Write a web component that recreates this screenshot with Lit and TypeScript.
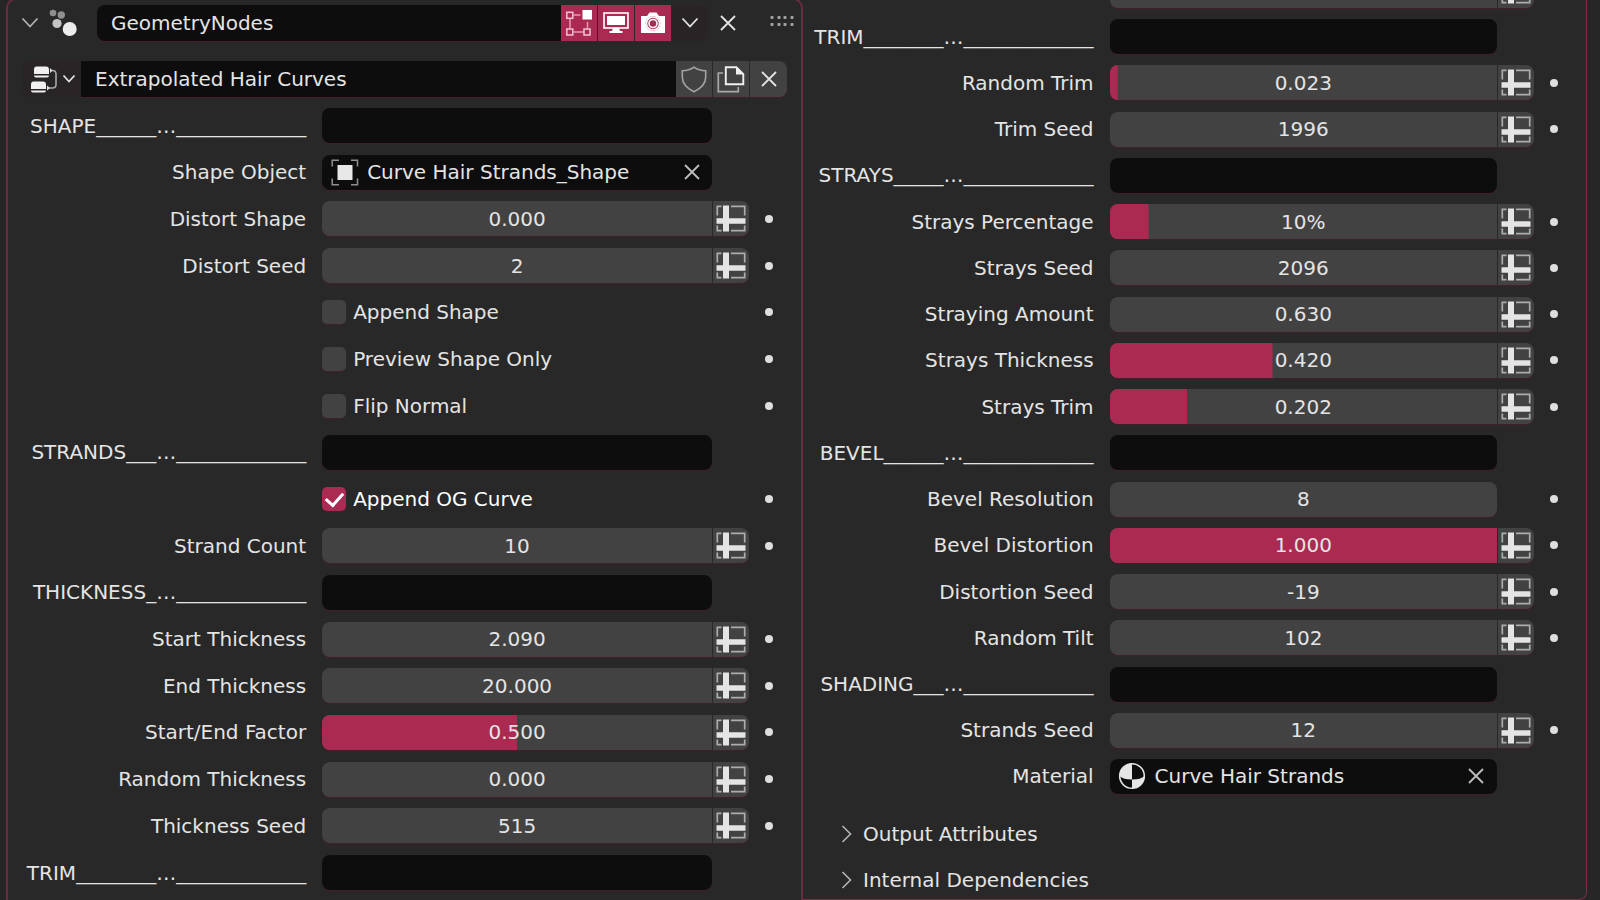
import { LitElement, html, css, svg, nothing } from "lit";
import { customElement, property } from "lit/decorators.js";
import { classMap } from "lit/directives/class-map.js";

type Row =
  | { kind: "section"; label: string }
  | { kind: "number"; label: string; value: string; fill?: number; attribute?: boolean }
  | { kind: "check"; label: string; checked?: boolean }
  | { kind: "picker"; label: string; value: string; icon: "object" | "material" };

const leftRows: Row[] = [
  { kind: "section", label: "SHAPE______…_____________" },
  { kind: "picker", label: "Shape Object", value: "Curve Hair Strands_Shape", icon: "object" },
  { kind: "number", label: "Distort Shape", value: "0.000" },
  { kind: "number", label: "Distort Seed", value: "2" },
  { kind: "check", label: "Append Shape" },
  { kind: "check", label: "Preview Shape Only" },
  { kind: "check", label: "Flip Normal" },
  { kind: "section", label: "STRANDS___…_____________" },
  { kind: "check", label: "Append OG Curve", checked: true },
  { kind: "number", label: "Strand Count", value: "10" },
  { kind: "section", label: "THICKNESS_…_____________" },
  { kind: "number", label: "Start Thickness", value: "2.090" },
  { kind: "number", label: "End Thickness", value: "20.000" },
  { kind: "number", label: "Start/End Factor", value: "0.500", fill: 50 },
  { kind: "number", label: "Random Thickness", value: "0.000" },
  { kind: "number", label: "Thickness Seed", value: "515" },
  { kind: "section", label: "TRIM________…_____________" },
];

const rightRows: Row[] = [
  { kind: "number", label: "", value: "" },
  { kind: "section", label: "TRIM________…_____________" },
  { kind: "number", label: "Random Trim", value: "0.023", fill: 2 },
  { kind: "number", label: "Trim Seed", value: "1996" },
  { kind: "section", label: "STRAYS_____…_____________" },
  { kind: "number", label: "Strays Percentage", value: "10%", fill: 10 },
  { kind: "number", label: "Strays Seed", value: "2096" },
  { kind: "number", label: "Straying Amount", value: "0.630" },
  { kind: "number", label: "Strays Thickness", value: "0.420", fill: 42 },
  { kind: "number", label: "Strays Trim", value: "0.202", fill: 20 },
  { kind: "section", label: "BEVEL______…_____________" },
  { kind: "number", label: "Bevel Resolution", value: "8", attribute: false },
  { kind: "number", label: "Bevel Distortion", value: "1.000", fill: 100 },
  { kind: "number", label: "Distortion Seed", value: "-19" },
  { kind: "number", label: "Random Tilt", value: "102" },
  { kind: "section", label: "SHADING___…_____________" },
  { kind: "number", label: "Strands Seed", value: "12" },
  { kind: "picker", label: "Material", value: "Curve Hair Strands", icon: "material" },
];

const icon = (w: number, h: number, body: unknown) =>
  html`<svg width=${w} height=${h} viewBox="0 0 ${w} ${h}" fill="none" aria-hidden="true">${body}</svg>`;

const icons = {
  chevron: () => icon(18, 12, svg`<path d="M1.5 1.5 9 9.5 16.5 1.5" stroke="currentColor" stroke-width="1.8"/>`),
  right: () => icon(11, 18, svg`<path d="M1.5 1 9.5 9 1.5 17" stroke="#b4b4b4" stroke-width="1.6"/>`),
  cross: () => icon(16, 16, svg`<path d="M1 1 15 15M15 1 1 15" stroke="currentColor" stroke-width="1.8"/>`),
  particles: () =>
    icon(28, 28, svg`<circle cx="4" cy="4" r="3.3" fill="#8f8f8f"/><circle cx="12.3" cy="6" r="3.7" fill="#8f8f8f"/>
      <circle cx="8" cy="14.5" r="4.6" fill="#c4c4c4"/><circle cx="20.7" cy="20" r="7" fill="#ececec"/>`),
  nodes: () =>
    icon(28, 27, svg`<path d="M6.500 0.500h9.500q3 0 3 3v4.500h-15v-4.500q0-3 2.500-3zM4 9.500h15q0 2-2 2H6q-2 0-2-2z" fill="#f0f0f0"/>
      <path d="M3.500 15.500h9.500q3 0 3 3v4.500h-15v-4.500q0-3 2.500-3zM1 24.500h15q0 2-2 2H3q-2 0-2-2z" fill="#f0f0f0"/>
      <path d="M20 4.500h2.500q3.500 0 3.500 3.500v10.500q0 3.500-3.500 3.500h-4.500" stroke="#a9a9a9" stroke-width="1.600"/>
      <path d="M20 2v5l2.500-2.500zM17 19.500v5l3-2.500z" fill="#e5e5e5"/>`),
  cage: () =>
    icon(26, 27, svg`<path d="M7.5 5h7M4 8.5V18.5M7.5 22h10.5M21.500 12v6.500" stroke="#e79bb2" stroke-width="1.5"/>
      <g stroke="#f3c3d1" stroke-width="1.5"><rect x="0.8" y="2.3" width="6" height="6"/><rect x="0.8" y="19" width="6" height="6"/><rect x="18" y="19" width="6" height="6"/></g>
      <rect x="16.5" y="0" width="9.5" height="9.5" fill="#fff"/>`),
  monitor: () =>
    icon(26, 22, svg`<rect x="1" y="1" width="24" height="15" stroke="#fff" stroke-width="1.6"/><rect x="4" y="4" width="18" height="9" fill="#fff"/>
      <path d="M10 16h6l1 3h2.500v2h-13v-2H9z" fill="#fff"/>`),
  camera: () =>
    icon(26, 22, svg`<path fill-rule="evenodd" d="M1 4h6l2.500-3.500h7L19 4h6v17H1zM13 4.200a7.300 7.300 0 1 0 0 14.600 7.300 7.300 0 0 0 0-14.600z" fill="#fff"/>
      <circle cx="13" cy="11.500" r="4" stroke="#fff" stroke-width="1.600"/><circle cx="13" cy="11.500" r="6.500" stroke="#fff" stroke-width="1.600"/>`),
  grip: () =>
    icon(24, 12, svg`${[2, 9, 15, 22].map((x) => [2.5, 9.5].map((y) => svg`<rect x=${x - 1.5} y=${y - 1.5} width="3" height="3" rx="0.8" fill="#a2a2a2"/>`))}`),
  shield: () =>
    icon(26, 27, svg`<path d="M13 1.200C9.500 3.800 5.500 4.800 1.300 4.800V11c0 7 5 11.500 11.700 14.800C19.700 22.500 24.700 18 24.700 11V4.800C20.500 4.800 16.500 3.800 13 1.200z" stroke="#a3a3a3" stroke-width="1.600"/>`),
  copy: () =>
    icon(28, 27, svg`<path d="M6 7H1.300v18.700h20V21" stroke="#a9a9a9" stroke-width="1.700"/>
      <path d="M8.800 1.200h10.500l7 7v10H8.800z" stroke="#f0f0f0" stroke-width="1.900"/><path d="M19 0.500v8h8z" fill="#f0f0f0"/>`),
  attribute: () =>
    icon(30, 27, svg`<path d="M5.500 1.300H1.300V10.500M15 1.300h13.700V10.500M1.300 20.500v5.200h4.200M15 25.700h13.700v-5.200" stroke="#adadad" stroke-width="1.700"/>
      <path d="M7 0.500h6v26h-6zM0.500 13.200h29v5.600h-29z" fill="#e4e4e4"/>`),
  object: () =>
    icon(28, 27, svg`<path d="M1.200 7.500V1.200H8M20 1.200h6.500V7.500M26.500 19.500v6.300H20M8 25.800H1.200V19.500" stroke="#909090" stroke-width="1.500"/>
      <rect x="6.500" y="6" width="15" height="15" fill="#e8e8e8"/>`),
  material: () =>
    icon(28, 28, svg`<circle cx="14" cy="14" r="12.300" stroke="#e6e6e6" stroke-width="1.600"/>
      <path d="M14 1.500V17.500C8 17.500 4 16.500 1.500 14A12.500 12.500 0 0 1 14 1.500zM14 17.500C20 17.500 24 16.500 26.500 14A12.500 12.500 0 0 1 14 26.500z" fill="#e6e6e6"/>`),
};

const shared = css`
  * {
    box-sizing: border-box;
  }
  svg {
    display: block;
    flex: none;
  }
  button,
  input {
    margin: 0;
    padding: 0;
    border: 0;
    font: inherit;
    color: inherit;
    background: none;
    border-radius: 0;
    outline-offset: -2px;
  }
  button {
    display: flex;
    align-items: center;
    justify-content: center;
    flex: none;
  }
`;

@customElement("property-row")
export class PropertyRow extends LitElement {
  @property({ attribute: false }) row!: Row;

  static styles = [
    shared,
    css`
      :host {
        display: grid;
        grid-template-columns: var(--label) 16px var(--field) 37px 40px;
        height: 35px;
        flex: none;
        align-items: stretch;
      }
      .label {
        grid-column: 1;
        align-self: center;
        justify-self: end;
        white-space: nowrap;
      }
      .field {
        grid-column: 3;
        display: flex;
        align-items: center;
        min-width: 0;
        border-radius: 8px;
        overflow: hidden;
        box-shadow: var(--edge);
      }
      .dark {
        background: #0d0d0d;
      }
      .number {
        background: #424242;
      }
      .joined {
        border-radius: 8px 0 0 8px;
      }
      .value {
        width: 100%;
        height: 100%;
        text-align: center;
        background: linear-gradient(#aa2a51, #aa2a51) no-repeat left / 0 100%;
      }
      .name {
        flex: 1;
        min-width: 0;
      }
      .pick {
        width: 45px;
        height: 100%;
      }
      .clear {
        width: 41px;
        height: 100%;
        color: #bdbdbd;
      }
      .attribute {
        grid-column: 4;
        margin-left: 1px;
        height: 100%;
        background: #424242;
        border-radius: 0 8px 8px 0;
        box-shadow: var(--edge);
      }
      .dot {
        grid-column: 5;
        width: 100%;
      }
      .dot::before {
        content: "";
        width: 8px;
        height: 8px;
        border-radius: 50%;
        background: #dedede;
      }
      .check {
        grid-column: 3;
        display: flex;
        align-items: center;
        gap: 7px;
      }
      .box {
        appearance: none;
        display: grid;
        place-items: center;
        width: 24px;
        height: 24px;
        border-radius: 5px;
        background: #424242;
        box-shadow: var(--edge);
      }
      .box:checked {
        background: #aa2a51;
      }
      .box:checked::before {
        content: "";
        width: 8px;
        height: 14px;
        border: solid #fff;
        border-width: 0 3px 3px 0;
        transform: translateY(-2px) rotate(42deg);
      }
      .on {
        color: #fff;
      }
    `,
  ];

  render() {
    const row = this.row;
    if (row.kind === "check") {
      return html`<label class=${classMap({ check: true, on: !!row.checked })}>
          <input class="box" type="checkbox" .checked=${!!row.checked} />${row.label}</label
        ><button class="dot" aria-label="Animate property"></button>`;
    }
    const label = html`<label class="label" for="value">${row.label}</label>`;
    if (row.kind === "section") {
      return html`${label}
        <div class="field dark"><input class="name" id="value" type="text" /></div>`;
    }
    if (row.kind === "picker") {
      return html`${label}
        <div class="field dark">
          <button class="pick" aria-label="Browse">${icons[row.icon]()}</button>
          <input class="name" id="value" type="text" .value=${row.value} />
          <button class="clear" aria-label="Clear">${icons.cross()}</button>
        </div>`;
    }
    const hasAttribute = row.attribute !== false;
    return html`${label}
      <div class=${classMap({ field: true, number: true, joined: hasAttribute })}>
        <input
          class="value"
          id="value"
          type="text"
          inputmode="decimal"
          .value=${row.value}
          style="background-size: ${row.fill ?? 0}% 100%"
        />
      </div>
      ${hasAttribute
        ? html`<button class="attribute" aria-label="Use attribute">${icons.attribute()}</button>`
        : nothing}
      <button class="dot" aria-label="Animate property"></button>`;
  }
}

@customElement("app-root")
export class AppRoot extends LitElement {
  static styles = [
    shared,
    css`
      :host {
        --edge: 0 1px 0 #41202b;
        display: grid;
        grid-template-columns: 61fr 60fr;
        height: 100vh;
        padding: 0 13px 0 6px;
        overflow: hidden;
        background: #262626;
        color: #e4e4e4;
        font: 20px/24px "DejaVu Sans", sans-serif;
      }
      .panel {
        display: flex;
        flex-direction: column;
        min-width: 0;
        min-height: 0;
        background: #282828;
      }
      .first {
        --label: minmax(0, 13fr);
        --field: minmax(0, 17fr);
        margin-top: -2px;
        padding: 5px 0 10px;
        border: solid #6b2b40;
        border-width: 2px 2px 0;
        border-radius: 10px 10px 0 0;
      }
      .second {
        --label: minmax(0, 3fr);
        --field: minmax(0, 4fr);
        border: solid #7a2f47;
        border-width: 0 1px 1px 0;
        border-radius: 0 0 8px 0;
      }
      .rows {
        flex: 1;
        display: flex;
        flex-direction: column;
        justify-content: space-between;
        padding-right: 12px;
      }
      .continued {
        margin-top: -27px;
      }
      .bar {
        display: flex;
        height: 36px;
        align-items: stretch;
      }
      .modifier {
        padding: 0 7px 0 14px;
        margin-bottom: 20px;
      }
      .group {
        padding: 0 14px;
        margin-bottom: 11px;
      }
      .fold {
        width: 16px;
        color: #b0b0b0;
      }
      .particles {
        display: flex;
        align-items: center;
        width: 59px;
        padding-left: 11px;
      }
      .text {
        flex: 1;
        min-width: 0;
        padding-left: 14px;
        background: #0d0d0d;
        box-shadow: var(--edge);
      }
      .rounded {
        border-radius: 8px 0 0 8px;
      }
      .mode {
        width: 36px;
        margin-right: 1px;
        background: #aa2a51;
        box-shadow: var(--edge);
      }
      .extras {
        width: 36px;
        background: #282325;
        border-radius: 0 8px 8px 0;
      }
      .remove {
        width: 40px;
      }
      .grip {
        width: 24px;
        margin-left: 22px;
        align-items: flex-start;
        padding-top: 10px;
      }
      .browse {
        width: 59px;
        gap: 4px;
        padding-left: 2px;
        background: #292426;
        border-radius: 8px 0 0 8px;
      }
      .action {
        width: 36px;
        margin-right: 1px;
        background: #424242;
        box-shadow: var(--edge);
      }
      .last {
        width: 37px;
        margin-right: 0;
        border-radius: 0 8px 8px 0;
      }
      .subpanels {
        display: flex;
        flex-direction: column;
        gap: 10px;
        padding: 22px 0 1px 38px;
      }
      .sub {
        height: 36px;
        justify-content: flex-start;
        gap: 11px;
      }
    `,
  ];

  private rows(rows: Row[]) {
    return rows.map((row) => html`<property-row .row=${row}></property-row>`);
  }

  render() {
    return html`
      <section class="panel first">
        <div class="bar modifier">
          <button class="fold" aria-label="Collapse modifier">${icons.chevron()}</button>
          <span class="particles">${icons.particles()}</span>
          <input class="text rounded" type="text" aria-label="Modifier name" .value=${"GeometryNodes"} />
          <button class="mode" aria-label="Edit mode">${icons.cage()}</button>
          <button class="mode" aria-label="Realtime">${icons.monitor()}</button>
          <button class="mode" aria-label="Render">${icons.camera()}</button>
          <button class="extras" aria-label="Modifier menu">${icons.chevron()}</button>
          <button class="remove" aria-label="Remove modifier">${icons.cross()}</button>
          <button class="grip" aria-label="Reorder">${icons.grip()}</button>
        </div>
        <div class="bar group">
          <button class="browse" aria-label="Browse node group">
            ${icons.nodes()}
            <svg width="14" height="10" viewBox="0 0 14 10" fill="none" aria-hidden="true">
              <path d="M1.500 1.500 7 7.500 12.500 1.500" stroke="currentColor" stroke-width="1.800" />
            </svg>
          </button>
          <input class="text" type="text" aria-label="Node group" .value=${"Extrapolated Hair Curves"} />
          <button class="action" aria-label="Fake user">${icons.shield()}</button>
          <button class="action" aria-label="Duplicate">${icons.copy()}</button>
          <button class="action last" aria-label="Unlink">${icons.cross()}</button>
        </div>
        <div class="rows">${this.rows(leftRows)}</div>
      </section>
      <section class="panel second">
        <div class="rows continued">${this.rows(rightRows)}</div>
        <div class="subpanels">
          <button class="sub">${icons.right()} Output Attributes</button>
          <button class="sub">${icons.right()} Internal Dependencies</button>
        </div>
      </section>
    `;
  }
}
